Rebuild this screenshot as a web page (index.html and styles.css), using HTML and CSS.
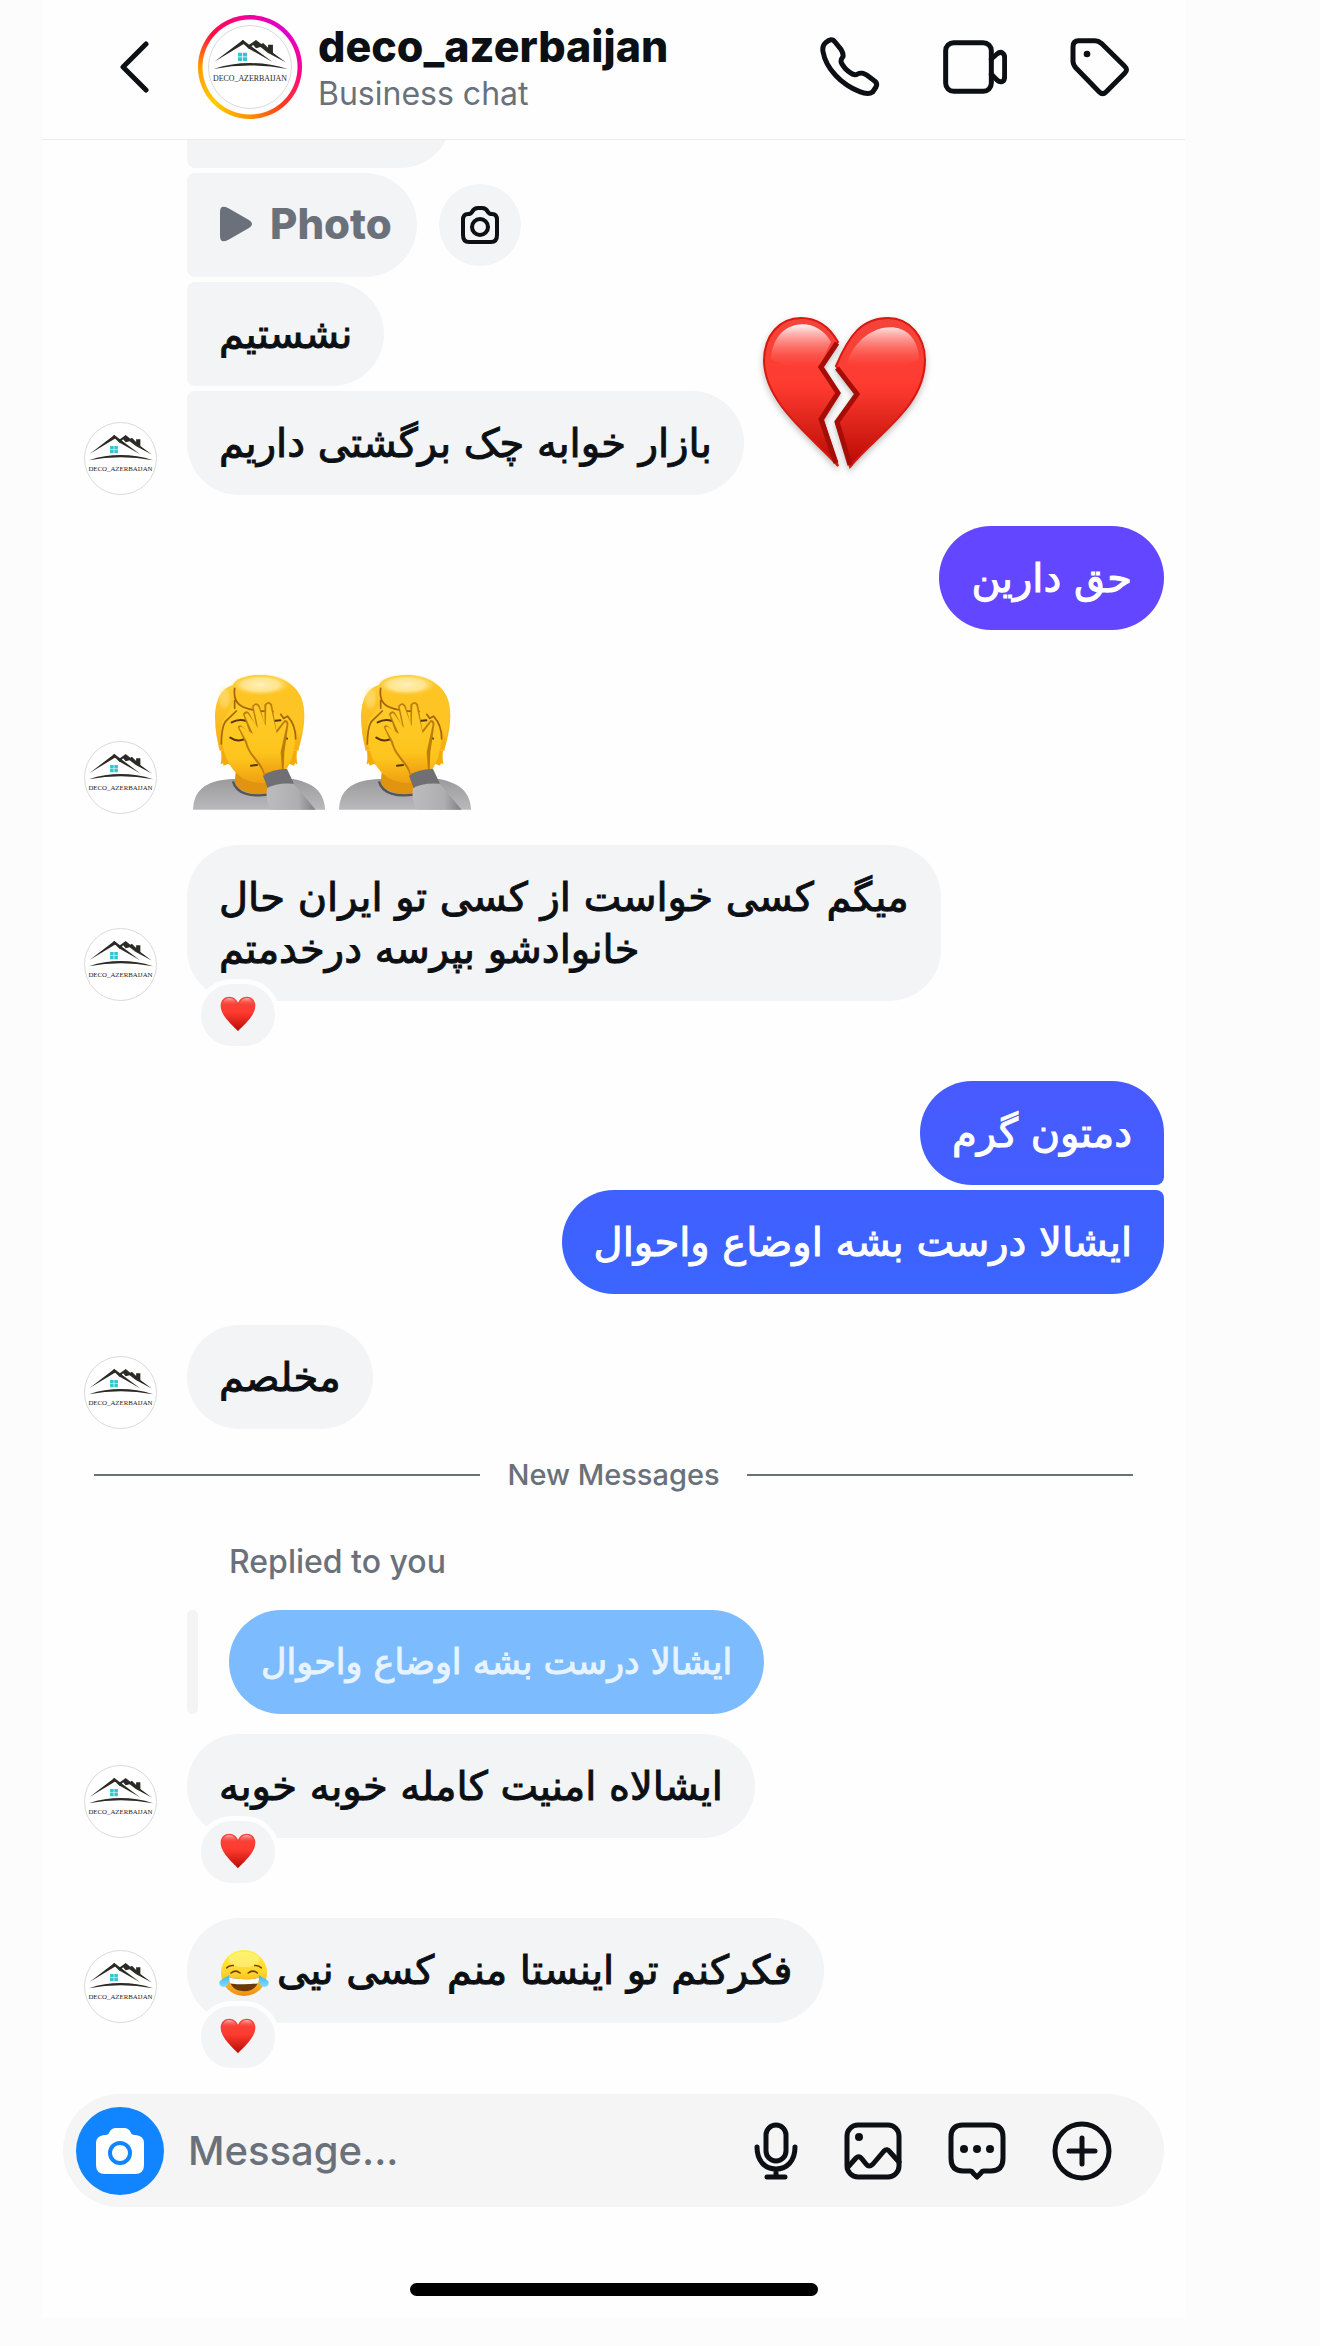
FILE: index.html
```html
<!DOCTYPE html>
<html lang="en">
<head>
	<meta charset="utf-8">
	<meta name="viewport" content="width=device-width, initial-scale=1.0">
	<title>deco_azerbaijan</title>
	<link rel="stylesheet" href="styles.css">
</head>
<body>
	<!-- shared drawings -->
	<svg class="defs" width="0" height="0" aria-hidden="true">
		<defs>
			<linearGradient id="red" x1="0" y1="0" x2="0" y2="1">
				<stop offset="0" stop-color="#f4443b"/>
				<stop offset=".45" stop-color="#ff3b30"/>
				<stop offset="1" stop-color="#b80a03"/>
			</linearGradient>
			<linearGradient id="shine" x1="0" y1="0" x2="0" y2="1">
				<stop offset="0" stop-color="#fff" stop-opacity=".95"/>
				<stop offset="1" stop-color="#ff5a50" stop-opacity="0"/>
			</linearGradient>
			<linearGradient id="hair" x1="0" y1="0" x2="0" y2="1">
				<stop offset="0" stop-color="#ffd23c"/>
				<stop offset="1" stop-color="#f7ae10"/>
			</linearGradient>
			<radialGradient id="gloss">
				<stop offset="0" stop-color="#fff0b8"/>
				<stop offset=".6" stop-color="#ffe796" stop-opacity=".9"/>
				<stop offset="1" stop-color="#ffd23c" stop-opacity="0"/>
			</radialGradient>
			<linearGradient id="skin" x1="0" y1="0" x2="0" y2="1">
				<stop offset="0" stop-color="#ffcc2a"/>
				<stop offset=".7" stop-color="#fdc41c"/>
				<stop offset="1" stop-color="#f0a012"/>
			</linearGradient>
			<linearGradient id="shirt" x1="0" y1="0" x2="0" y2="1">
				<stop offset="0" stop-color="#9b9b9d"/>
				<stop offset="1" stop-color="#b9b9bb"/>
			</linearGradient>
			<linearGradient id="sleeve" x1="0" y1="0" x2="1" y2="0">
				<stop offset="0" stop-color="#bcbcbe"/>
				<stop offset=".65" stop-color="#aeaeb0"/>
				<stop offset="1" stop-color="#7e7e81"/>
			</linearGradient>
			<linearGradient id="face" x1="0" y1="0" x2="0" y2="1">
				<stop offset="0" stop-color="#fff03c"/>
				<stop offset=".5" stop-color="#ffd42c"/>
				<stop offset="1" stop-color="#f08d12"/>
			</linearGradient>
			<linearGradient id="tear" x1="0" y1="0" x2="0" y2="1">
				<stop offset="0" stop-color="#3db5f5"/>
				<stop offset="1" stop-color="#7fdcff"/>
			</linearGradient>
		</defs>
		<symbol id="logo" viewBox="70 304 218 218">
			<g fill="#2b2a25">
				<path d="M84 399 160 341 169 349 159 354Z"/>
				<path d="M155 345 160 341 239 400 174 363Z"/>
				<path d="M174 356 195 341 209 352 214 349 227 362 227 354 240 354 240 375 275 401 226 375 207 360 195 363 187 354 181 361Z"/>
				<path d="M82 418Q179 387 279 418Q179 400 82 418Z"/>
			</g>
			<path fill="#35c5cf" d="M147 375h11v10h-11zM160 375h11v10h-11zM147 387h11v10h-11zM160 387h11v10h-11z"/>
			<text x="179" y="450" text-anchor="middle" font-family="Liberation Serif, serif" font-size="21" fill="#222">DECO_AZERBAIJAN</text>
		</symbol>
		<symbol id="heart" viewBox="88 260 112 112">
			<path fill="url(#red)" d="M144 370C138 360 90 325 90 290C90 272 103 262 117 262C130 262 140 271 144 281C148 271 158 262 171 262C185 262 198 272 198 290C198 325 150 360 144 370Z"/>
			<path fill="url(#shine)" opacity=".6" d="M96 288C97 260 133 259 139 285Q115 290 96 288ZM149 285C155 259 191 260 192 288Q170 290 149 285Z"/>
		</symbol>
		<symbol id="facepalm" viewBox="400 105 396 408">
			<path fill="url(#shirt)" d="M400 512C402 445 450 423 520 420L700 420C765 432 794 462 796 512Z"/>
			<path fill="#f3ab0c" d="M484 335Q487 365 482 376L490 373 492 380 505 375 530 385 530 330ZM712 335Q709 365 714 376L706 373 703 380 690 375 670 385 670 330Z"/>
			<path fill="#e09410" d="M528 400H622V464Q570 472 524 440Z"/>
			<path fill="none" stroke="#55565a" stroke-width="7" d="M520 427C530 465 575 474 624 467"/>
			<path fill="url(#hair)" d="M480 335C458 250 456 155 520 138C560 92 690 95 724 175C745 225 728 290 716 335Z"/>
			<path fill="url(#skin)" d="M486 250C478 340 515 430 602 432C685 432 712 350 708 245L650 205 525 190Z"/>
			<path fill="#fdc424" d="M519 140C535 95 690 92 724 175C741 220 728 275 719 300C710 260 690 238 672 232C640 214 550 224 527 182Z"/>
			<ellipse cx="603" cy="137" rx="92" ry="33" fill="url(#gloss)"/>
			<ellipse cx="494" cy="178" rx="22" ry="38" fill="url(#gloss)" opacity=".4"/>
			<path fill="none" stroke="#a3640a" stroke-width="5" stroke-linecap="round" d="M525 148Q519 190 550 204T640 217M525 185V208M530 216 500 245Q486 258 485 315M663 226 672 238 684 232Q708 258 708 300"/>
			<path fill="none" stroke="#5b3505" stroke-width="6" stroke-linecap="round" d="M516 250Q537 238 560 246M640 246 662 244M512 296Q532 310 556 300M574 380 592 378M676 296 682 299"/>
			<path fill="#bd7d0d" d="M534 264Q539 256 545 260L570 281 550 225Q557 211 568 221L590 262 577 201Q589 185 600 200L615 256 614 197Q626 182 637 196L650 274 675 243Q688 243 686 259L674 340 672 394 612 407C601 371 568 356 556 310Z"/>
			<path fill="url(#skin)" d="M539 266Q542 261 547 264L580 285 555 228Q560 218 567 227L595 267 582 203Q589 193 596 203L618 262 620 199Q626 190 632 199L651 283 676 250Q682 249 680 261L663 340 667 393 615 404C606 365 571 350 562 308Z"/>
			<path fill="#707074" d="M610 410Q640 389 682 390L703 434 624 448Z"/>
			<path fill="url(#sleeve)" d="M622 448Q650 430 702 434L768 512H634Q616 485 622 448Z"/>
		</symbol>
		<symbol id="joy" viewBox="95 50 154 148">
			<circle cx="172" cy="124" r="71" fill="url(#face)"/>
			<ellipse cx="172" cy="82" rx="48" ry="24" fill="#fff7a0" opacity=".5"/>
			<g fill="none" stroke="#6d4207" stroke-width="5" stroke-linecap="round">
				<path d="M119 108Q126 100 139 101M205 101Q218 100 225 108M132 124Q146 112 160 124M185 124Q199 112 213 124"/>
			</g>
			<path fill="#6c3a08" d="M126 139Q172 148 219 139Q213 180 172 180Q131 180 126 139Z"/>
			<path fill="#fff" d="M126 139Q172 148 219 139Q219 150 214 156Q172 162 130 156Q126 150 126 139Z"/>
			<path fill="url(#tear)" d="M126 130C128 158 119 169 107 167C94 165 94 151 100 146C107 140 117 138 126 130ZM218 130C216 158 225 169 237 167C250 165 250 151 244 146C237 140 227 138 218 130Z"/>
		</symbol>
	</svg>

	<main class="phone">
		<header class="top">
			<button class="back" type="button" aria-label="Back">
				<svg viewBox="0 0 30 52" width="30" height="52"><path d="M27 3 4 26 27 49"/></svg>
			</button>
			<a class="profile" href="#">
				<span class="ring"><svg class="avatar avatar-top" role="img" aria-label="deco_azerbaijan"><use href="#logo"/></svg></span>
				<span class="who">
					<strong>deco_azerbaijan</strong>
					<small>Business chat</small>
				</span>
			</a>
			<nav class="actions">
				<button type="button" aria-label="Call">
					<svg viewBox="30 48 180 180" width="60" height="60"><path stroke-width="15" d="M47 65Q65 48 75 63L93 85Q101 98 99 107C88 120 93 127 106 143C124 160 134 165 143 159C151 154 163 157 171 163L191 178Q204 186 198 198L188 213Q175 223 149 212C95 191 48 144 39 92Q36 74 47 65Z"/></svg>
				</button>
				<button type="button" aria-label="Video call">
					<svg viewBox="396 48 192 180" width="64" height="60"><rect x="404" y="65" width="137" height="146" rx="24" stroke-width="15"/><path stroke-width="15" d="M541 114 558 99Q569 90 577 98Q581 102 581 110V167Q580 181 572 182Q566 184 558 177L541 160"/></svg>
				</button>
				<button type="button" aria-label="Label">
					<svg viewBox="782 48 180 180" width="60" height="60"><path stroke-width="15" d="M808 59H857Q867 59 876 67L946 136Q957 146 946 157L890 213Q880 223 870 213L800 141Q791 131 791 121V77Q791 59 808 59Z"/><circle class="dot" cx="833" cy="99" r="10"/></svg>
				</button>
			</nav>
		</header>

		<section class="chat" lang="fa">
			<div class="row"><div class="bubble first clipped"></div></div>
			<div class="row tight">
				<button class="bubble mid photo" type="button">
					<svg viewBox="0 0 32 36" width="32" height="36"><path d="M0 6Q0-2 8 2L29 14Q35 18 29 22L8 34Q0 38 0 30Z"/></svg>
					<span lang="en">Photo</span>
				</button>
				<button class="snap" type="button" aria-label="Reply with photo">
					<svg viewBox="0 0 38 38" width="38" height="38"><path d="M11 6Q13 2 17 2H21Q25 2 27 6 28 8 31 8 36 8 36 14V29Q36 36 30 36H8Q2 36 2 29V14Q2 8 7 8 10 8 11 6Z"/><circle cx="19" cy="21" r="8"/></svg>
				</button>
			</div>
			<div class="row tight"><p class="bubble mid">نشستیم</p></div>
			<div class="row tight">
				<svg class="avatar"><use href="#logo"/></svg>
				<p class="bubble end">بازار خوابه چک برگشتی داریم</p>
				<svg class="broken" viewBox="0 0 164 156" role="img" aria-label="Broken heart">
					<path fill="url(#red)" stroke="#d81910" stroke-width="2" d="M75 25C66 9 53 1 38 1C17 1 1 18 1 44C2 87 49 120 75 149L60 103 76 77 56 50Z"/>
					<path fill="url(#red)" stroke="#d81910" stroke-width="2" d="M73 49C86 18 99 1 125 1C147 1 162 20 162 43C162 90 115 116 87 150L73 105 95 77Z"/>
					<path fill="none" stroke="#a50d06" stroke-width="5" d="M74 26 58 50 75 76 58 102 73 146M74 51 94 77 74 105 87 148"/>
					<path fill="url(#shine)" d="M8 42C10 2 53-3 68 25L57 48Q30 54 8 42ZM84 46C98 2 155-4 156 43Q118 58 84 46Z"/>
				</svg>
			</div>

			<div class="row sent block"><p class="bubble violet">حق دارین</p></div>

			<div class="row stickers">
				<svg class="avatar"><use href="#logo"/></svg>
				<svg class="sticker" role="img" aria-label="Facepalm"><use href="#facepalm"/></svg>
				<svg class="sticker" role="img" aria-label="Facepalm"><use href="#facepalm"/></svg>
			</div>

			<div class="row block">
				<svg class="avatar"><use href="#logo"/></svg>
				<p class="bubble">میگم کسی خواست از کسی تو ایران حال<br>خانوادشو بپرسه درخدمتم
					<button class="reaction" type="button" aria-label="Liked"><svg><use href="#heart"/></svg></button>
				</p>
			</div>

			<div class="row sent spaced"><p class="bubble indigo start">دمتون گرم</p></div>
			<div class="row sent tight"><p class="bubble blue finish">ایشالا درست بشه اوضاع واحوال</p></div>

			<div class="row block">
				<svg class="avatar"><use href="#logo"/></svg>
				<p class="bubble">مخلصم</p>
			</div>

			<h2 class="divider" lang="en">New Messages</h2>

			<p class="replied" lang="en">Replied to you</p>
			<blockquote class="quote"><p class="bubble">ایشالا درست بشه اوضاع واحوال</p></blockquote>
			<div class="row answer">
				<svg class="avatar"><use href="#logo"/></svg>
				<p class="bubble">ایشالاه امنیت کامله خوبه خوبه
					<button class="reaction" type="button" aria-label="Liked"><svg><use href="#heart"/></svg></button>
				</p>
			</div>
			<div class="row spaced">
				<svg class="avatar"><use href="#logo"/></svg>
				<p class="bubble">فکرکنم تو اینستا منم کسی نیی<svg class="joy" role="img" aria-label="Tears of joy"><use href="#joy"/></svg>
					<button class="reaction" type="button" aria-label="Liked"><svg><use href="#heart"/></svg></button>
				</p>
			</div>
		</section>

		<form class="composer">
			<button class="camera" type="button" aria-label="Camera">
				<svg viewBox="0 0 48 46" width="48" height="46"><path d="M13 5Q15 0 20 0H28Q33 0 35 5 36 7 40 7 48 8 48 15V37Q48 46 39 46H9Q0 46 0 37V15Q0 8 8 7 12 7 13 5Z"/><circle cx="24" cy="25" r="10"/></svg>
			</button>
			<label class="hidden" for="message">Message</label>
			<input id="message" type="text" placeholder="Message...">
			<div class="tools">
				<button type="button" aria-label="Voice message">
					<svg viewBox="0 0 44 60" width="44" height="60"><rect x="12" y="4" width="20" height="36" rx="10"/><path d="M3 26C3 40 11 48 22 48S41 40 41 26M22 48V56M13 56H31"/></svg>
				</button>
				<button type="button" aria-label="Gallery">
					<svg viewBox="0 0 58 60" width="58" height="60"><rect x="3" y="4" width="52" height="52" rx="11"/><path d="M4 46 12 37Q15 34 18 38L22 43Q25 47 29 43L40 30Q43 27 46 31L55 41"/><circle class="dot" cx="15" cy="16" r="4"/></svg>
				</button>
				<button type="button" aria-label="Quick replies">
					<svg viewBox="0 0 58 60" width="58" height="60"><path d="M15 4H43Q55 4 55 16V37Q55 50 43 50H36Q34 50 33 52L29 56 25 52Q24 50 22 50H15Q3 50 3 37V16Q3 4 15 4Z"/><circle class="dot" cx="16" cy="28" r="4"/><circle class="dot" cx="29" cy="28" r="4"/><circle class="dot" cx="42" cy="28" r="4"/></svg>
				</button>
				<button type="button" aria-label="More">
					<svg viewBox="0 0 60 60" width="60" height="60"><circle cx="30" cy="30" r="27"/><path d="M17 30H43M30 17V43"/></svg>
				</button>
			</div>
		</form>
		<div class="home"></div>
	</main>
</body>
</html>
```
FILE: styles.css
```css
* {
	box-sizing: border-box;
}
body {
	margin: 0;
	padding: 0 135px 29px 42px;
	background: #fcfcfc;
	color: #0c1014;
	font-family: Inter, "Liberation Sans", sans-serif;
}
p, h2, blockquote {
	margin: 0;
}
button {
	padding: 0;
	border: 0;
	background: none;
	color: inherit;
	font: inherit;
}
svg {
	display: block;
	flex: none;
}
.defs {
	position: absolute;
}
.hidden {
	position: absolute;
	width: 1px;
	height: 1px;
	overflow: hidden;
	clip-path: inset(50%);
}
.phone {
	background: #fefefe;
	padding-bottom: 22px;
}

/* header */
.top {
	display: flex;
	align-items: center;
	padding: 15px 55px 20px 77px;
	border-bottom: 1px solid #eaebed;
}
.back svg, .actions svg, .tools svg, .snap svg {
	fill: none;
	stroke: #0c1014;
	stroke-linecap: round;
	stroke-linejoin: round;
}
.back svg {
	stroke-width: 5;
}
.profile {
	display: flex;
	align-items: center;
	gap: 16px;
	margin-left: 49px;
	color: inherit;
	text-decoration: none;
}
.ring {
	display: grid;
	place-items: center;
	width: 104px;
	height: 104px;
	border-radius: 50%;
	background:
		radial-gradient(circle, #fefefe 47px, transparent 48px),
		conic-gradient(#f2009b, #dd00cc 45deg, #fc0092 90deg, #ff3a1e 140deg,
			#ff9000 180deg, #ffcc00 225deg, #ff9a00 270deg, #ff1040 310deg, #f2009b);
}
.avatar {
	width: 73px;
	height: 73px;
	margin-right: 30px;
	border: 1px solid #d9dadb;
	border-radius: 50%;
	background: #fff;
}
.avatar-top {
	width: 84px;
	height: 84px;
	margin: 0;
}
.who {
	display: flex;
	flex-direction: column;
	padding-top: 6px;
}
.who strong {
	font-size: 43px;
	font-weight: 800;
	line-height: 48px;
}
.who small {
	font-size: 32px;
	line-height: 48px;
	color: #6a717a;
}
.actions {
	display: flex;
	gap: 63px;
	margin-left: auto;
}
.dot {
	fill: #0c1014;
	stroke: none;
}

/* messages */
.chat {
	padding: 0 21px 71px 42px;
	overflow: hidden;
}
.row {
	display: flex;
	align-items: flex-end;
	position: relative;
}
.row > .bubble:first-child {
	margin-left: 103px;
}
.row.sent {
	justify-content: flex-end;
}
.tight {
	margin-top: 5px;
}
.block {
	margin-top: 31px;
}
.spaced {
	margin-top: 80px;
}
.bubble {
	position: relative;
	padding: 26px 32px;
	border-radius: 52px;
	background: #f2f4f6;
	font-family: "DejaVu Sans", sans-serif;
	font-size: 40px;
	line-height: 52px;
	direction: rtl;
	text-align: left;
	-webkit-text-stroke: 1px currentColor;
}
.clipped {
	width: 265px;
	height: 104px;
	margin-top: -76px;
}
.first {
	border-bottom-left-radius: 8px;
}
.mid {
	border-top-left-radius: 8px;
	border-bottom-left-radius: 8px;
}
.end {
	border-top-left-radius: 8px;
}
.start {
	border-bottom-right-radius: 8px;
}
.finish {
	border-top-right-radius: 8px;
}
.photo {
	display: flex;
	align-items: center;
	gap: 18px;
	padding: 25px 25px 27px 33px;
	direction: ltr;
	font-family: Inter, sans-serif;
	font-size: 42px;
	font-weight: 800;
	color: #6a717a;
	-webkit-text-stroke: 0;
}
.photo svg {
	fill: #6a717a;
}
.snap {
	display: grid;
	place-items: center;
	align-self: center;
	width: 82px;
	height: 82px;
	margin-left: 22px;
	border-radius: 50%;
	background: #f2f4f6;
}
.snap svg {
	stroke-width: 4;
}
.sent .bubble {
	color: #fff;
}
.sent .violet {
	background: #6346ff;
}
.sent .indigo {
	background: linear-gradient(#485aff, #435eff);
}
.sent .blue {
	background: linear-gradient(#405fff, #3b65ff);
}
.broken {
	position: absolute;
	left: 679px;
	bottom: 22px;
	width: 164px;
	height: 156px;
	overflow: visible;
	filter: drop-shadow(0 3px 3px rgba(0, 0, 0, .25));
}
.stickers {
	margin-top: 44px;
}
.stickers .avatar {
	margin-right: 36px;
}
.sticker {
	width: 132px;
	height: 136px;
	margin: 0 14px 4px 0;
}
.reaction {
	position: absolute;
	left: 9px;
	bottom: -50px;
	padding: 12px 19px 14px;
	border: 5px solid #fefefe;
	border-radius: 36px;
	background: #f2f4f6;
}
.reaction svg {
	width: 36px;
	height: 36px;
}
.joy {
	display: inline-block;
	width: 50px;
	height: 48px;
	margin-right: 8px;
	vertical-align: middle;
}
.divider {
	display: flex;
	align-items: center;
	gap: 27px;
	margin: 26px 31px 0 10px;
	font-size: 29px;
	font-weight: 500;
	line-height: 40px;
	color: #6a717a;
}
.divider::before, .divider::after {
	content: "";
	flex: 1;
	height: 2px;
	background: #6a717a;
}
.replied {
	margin: 47px 0 0 145px;
	font-size: 32px;
	font-weight: 500;
	line-height: 40px;
	color: #6a717a;
}
.quote {
	display: flex;
	gap: 31px;
	margin: 28px 0 0 103px;
}
.quote::before {
	content: "";
	width: 11px;
	border-radius: 5px;
	background: #f2f4f6;
}
.quote .bubble {
	background: #7dbbff;
	color: #e7f3ff;
	font-size: 35px;
}
.answer {
	margin-top: 20px;
}

/* message box */
.composer {
	display: flex;
	align-items: center;
	height: 113px;
	margin: 0 21px;
	padding: 0 52px 0 13px;
	border-radius: 57px;
	background: #f5f5f6;
}
.camera {
	display: grid;
	place-items: center;
	flex: none;
	width: 88px;
	height: 88px;
	border-radius: 50%;
	background: #1184ff;
}
.camera path {
	fill: #fff;
}
.camera circle {
	fill: #fff;
	stroke: #1184ff;
	stroke-width: 4;
}
.composer input {
	flex: 1;
	min-width: 0;
	margin-left: 24px;
	padding: 0;
	border: 0;
	background: none;
	font: 500 40px/52px Inter, sans-serif;
}
.composer input::placeholder {
	color: #6a717a;
	opacity: 1;
}
.tools {
	display: flex;
	gap: 46px;
}
.tools svg {
	stroke-width: 5;
}
.home {
	width: 408px;
	max-width: 60%;
	height: 13px;
	margin: 76px auto 0;
	border-radius: 7px;
	background: #000;
}
```
